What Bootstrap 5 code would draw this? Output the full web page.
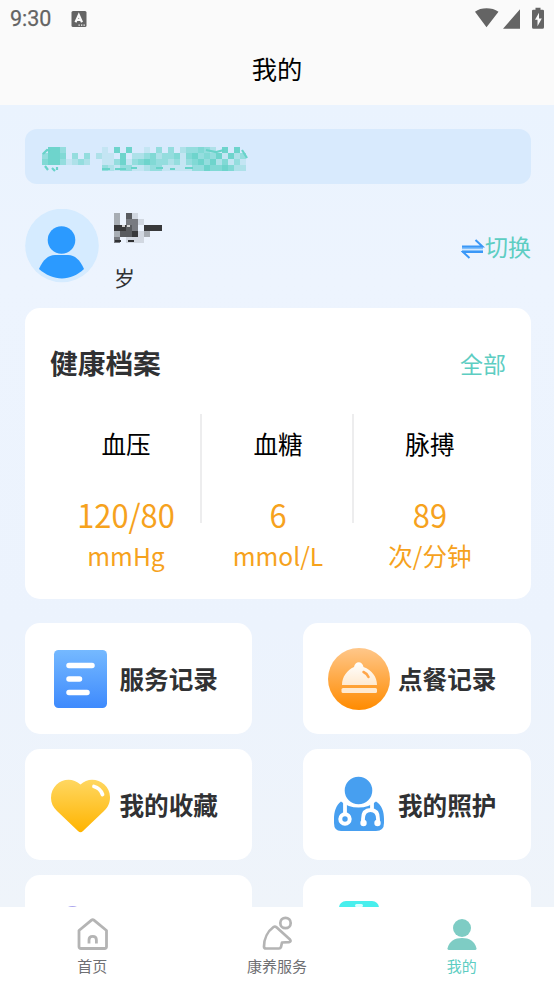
<!DOCTYPE html>
<html lang="zh-CN">
<head>
<meta charset="utf-8">
<meta name="viewport" content="width=device-width, initial-scale=1">
<title>我的</title>
<link href="https://cdn.jsdelivr.net/npm/bootstrap@5.3.0/dist/css/bootstrap.min.css" rel="stylesheet">
<style>
body{font-family:"Noto Sans CJK SC",sans-serif;color:#303133;background:#fff;line-height:1}
svg{display:block;flex:none}
.app{height:984px}
.topbar{height:105px;background:#fafafa}
.status{height:37px;padding:0 9px 0 10px;color:#646464}
.clock{font:400 21.5px/37px Roboto,sans-serif;-webkit-text-stroke:.25px #646464}
.ime-icon{margin-left:20px}
.page-title{font-size:25.3px;line-height:63px;color:#000}
.content-area{background:linear-gradient(#eaf3fe 0,#edf4fe 22%,#ecf3fd 65%,#eff4fa 100%);padding:24px 23px 0 25px;min-height:0}
.notice{height:55px;border-radius:12px;background:#d8eafd;padding:6px 0 0 17px}
.profile{margin-top:25px;height:74px}
.age{font-size:21px;line-height:24px;margin:26px 0 0 -1px;color:#303133}
.teal{color:#5dcdc2}
.switcher{font-size:23px;line-height:28px}
.panel{background:#fff;border-radius:15px}
.health{margin-top:25px;height:291px;padding:34px 25px 0}
.health h2{font-size:27.7px;font-weight:700;line-height:40px;margin:0}
.all-link{font-size:23px;line-height:42px}
.metrics{margin-top:30px}
.metric{height:165px;position:relative}
.metric+.metric::before{content:"";position:absolute;left:-1.5px;top:0;width:1.5px;height:109px;background:#ededee}
.metric-name{font-size:24.6px;line-height:36px;padding-top:11px;color:#000}
.metric-value{font-size:30.8px;line-height:40px;margin-top:33px}
.metric-value span{display:inline-block;transform:scaleY(1.04)}
.metric-unit{font-size:24.6px;line-height:36px;margin-top:3px}
.orange{color:#f6a21d}
.tiles{margin-top:24px;display:grid;grid-template-columns:227px 228px;justify-content:space-between;row-gap:15px}
.tile{height:111px;padding-left:24px;font-size:24.6px;font-weight:700}
.tile:nth-child(even){padding-left:25px}
.tile svg{margin-right:8.5px}
.tile:nth-child(even) svg{margin-right:8px}
.tabbar{height:77px;font-size:15px;color:#6f7073;z-index:2}
.tab-item{padding-top:8px}
.tab-item span{line-height:20px;margin-top:3px}
</style>
<script src="https://cdn.jsdelivr.net/npm/bootstrap@5.3.0/dist/js/bootstrap.bundle.min.js"></script>
</head>
<body>
<div class="app d-flex flex-column overflow-hidden">
  <header class="topbar flex-shrink-0">
    <div class="status d-flex align-items-center">
      <span class="clock">9:30</span>
      <svg class="ime-icon" width="16" height="18" viewBox="0 0 16 18"><rect x=".5" y="1" width="15" height="16" rx="1.500" fill="#646464"/><path d="M4.500 12.200 7.800 5 11 12.200M5.600 10h4.400" fill="none" stroke="#fafafa" stroke-width="2.200"/><path d="M7.500 15.200h1.300m1.200 0h1.300m1.200 0h1.300" stroke="#fafafa" stroke-width="1.200"/></svg>
      <svg class="ms-auto" width="71" height="24" viewBox="474 7.800 71 24" fill="#646464"><path d="M475 12.500C481 8 492 8 498.500 12.500L486.500 28ZM520 10v19.500h-17ZM535.500 8.500h5v2h2.200q1.300 0 1.300 1.300v16.200q0 1.500-1.500 1.500h-9q-1.500 0-1.500-1.500V11.800q0-1.300 1.300-1.300h2.200Z"/><path d="m539 13.500-4 7h2.500V27l4.300-7.800h-2.800Z" fill="#fafafa"/></svg>
    </div>
    <div class="page-title text-center">我的</div>
  </header>

  <main class="content-area flex-fill overflow-hidden">
    <div class="notice d-flex align-items-center">
      <svg id="noticeMask" width="206" height="26" viewBox="0 0 206 26"></svg>
    </div>
    <div class="profile d-flex">
      <svg width="74" height="74" viewBox="0 0 74 74"><circle cx="37" cy="36.500" r="36.800" fill="#d5ebff"/><circle cx="36.500" cy="31" r="13.800" fill="#2b9aff"/><path d="M14 60C18 51 23 46 30 46h13c7 0 12 5 16 14-13 12.500-31 12.500-45 0Z" fill="#2b9aff"/></svg>
      <div class="ms-3">
        <svg id="nameMask" width="48" height="30" viewBox="0 0 48 30" transform="translate(-1 4)"></svg>
        <div class="age">岁</div>
      </div>
      <div class="ms-auto d-flex align-items-center teal switcher">
        <svg width="24" height="22" viewBox="0 0 24 22" transform="translate(0 3)"><path d="M1 9.500h21M1 13.200h21" stroke="#82c0fb" stroke-width="3"/><path d="M1 8.500h20.500L14.500 2M22 14H2l6.500 6" fill="none" stroke="#3b98f7" stroke-width="2"/></svg><span>切换</span>
      </div>
    </div>

    <section class="panel health">
      <div class="d-flex justify-content-between">
        <h2>健康档案</h2><span class="teal all-link">全部</span>
      </div>
      <div class="row g-0 text-center metrics">
        <div class="col-4 metric"><div class="metric-name">血压</div><div class="metric-value orange"><span>120/80</span></div><div class="metric-unit orange">mmHg</div></div>
        <div class="col-4 metric"><div class="metric-name">血糖</div><div class="metric-value orange"><span>6</span></div><div class="metric-unit orange">mmol/L</div></div>
        <div class="col-4 metric"><div class="metric-name">脉搏</div><div class="metric-value orange"><span>89</span></div><div class="metric-unit orange">次/分钟</div></div>
      </div>
    </section>

    <div class="tiles">
      <div class="panel tile d-flex align-items-center">
        <svg width="62" height="62" viewBox="0 0 62 62"><defs><linearGradient id="gBlue" x2="0" y2="1"><stop stop-color="#75b9ff"/><stop offset="1" stop-color="#3e8afd"/></linearGradient></defs><rect x="5" y="2" width="53" height="58" rx="4.500" fill="url(#gBlue)"/><path d="M20 17.500h23M20 31h10.500M20 44.500h18" stroke="#fff" stroke-width="5.500" stroke-linecap="round"/></svg>
        <span>服务记录</span>
      </div>
      <div class="panel tile d-flex align-items-center">
        <svg width="62" height="62" viewBox="0 0 62 62"><defs><linearGradient id="gOrange" x2="0" y2="1"><stop stop-color="#ffc78a"/><stop offset="1" stop-color="#ff8b00"/></linearGradient><linearGradient id="gCream" x2="0" y2="1"><stop stop-color="#fff"/><stop offset="1" stop-color="#ffead0"/></linearGradient></defs><circle cx="31" cy="31" r="31" fill="url(#gOrange)"/><path d="M14 37c0-8 5-15 12-18C27 12.500 34.500 12.500 35.500 19 44 22 49 29 49 37Z" fill="url(#gCream)"/><path d="M35.500 24c2.500 1 4 2.500 5 5" stroke="#ffa64a" stroke-width="2.500" stroke-linecap="round" fill="none"/><rect x="13.500" y="40" width="35.500" height="5" rx="1.500" fill="#ffead0"/></svg>
        <span>点餐记录</span>
      </div>
      <div class="panel tile d-flex align-items-center">
        <svg width="62" height="62" viewBox="0 0 62 62"><defs><linearGradient id="gHeart" x2="0" y2="1"><stop stop-color="#ffd761"/><stop offset="1" stop-color="#ffb400"/></linearGradient></defs><path d="M31.500 10.500C42 0 61 8 61 23c0 6-2 10-6 14L34 57q-2.500 2.500-5 0L8 37C4 33 2 29 2 24 2 8 20 0 31.500 10.500Z" fill="url(#gHeart)"/><path d="M45 12.500c4 1 7 4 8.500 8" fill="none" stroke="#fff" stroke-width="3.800" stroke-linecap="round"/></svg>
        <span>我的收藏</span>
      </div>
      <div class="panel tile d-flex align-items-center">
        <svg width="62" height="62" viewBox="0 -1 62 62"><path d="M13 26.500q7 6 17.500 6t17.500-6c6 3.500 8 10.500 8 17.500v4q0 8-8 8H13q-7 0-7-8v-4c0-7 2-14 7-17.500Z" fill="#479ff0"/><circle cx="30.500" cy="15.500" r="15" fill="#479ff0" stroke="#fff" stroke-width="2.400"/><path d="M17 26v14M44 26v9M35 49v-5q0-9 7.500-9T50 44v5" stroke="#fff" stroke-width="3.800" fill="none"/><circle cx="17" cy="44" r="4.700" fill="#479ff0" stroke="#fff" stroke-width="4"/><circle cx="35.500" cy="48" r="3.200" fill="#fff"/><circle cx="49.500" cy="48" r="3.200" fill="#fff"/></svg>
        <span>我的照护</span>
      </div>
      <div class="panel tile d-flex align-items-center">
        <svg width="62" height="62" viewBox="0 0 62 62"><circle cx="23.500" cy="16.500" r="10.500" fill="#aaa5ee"/></svg>
      </div>
      <div class="panel tile d-flex align-items-center">
        <svg width="62" height="62" viewBox="0 0 62 62"><rect x="11" y="1" width="40" height="58" rx="7" fill="#48efed"/><rect x="27" y="4" width="8" height="3" rx="1.500" fill="#d9ffff"/></svg>
      </div>
    </div>
  </main>

  <nav class="tabbar bg-white d-flex flex-shrink-0">
    <div class="tab-item col-4 d-flex flex-column align-items-center">
      <svg width="38" height="38" viewBox="0 0 38 38" fill="none" stroke="#b4b4b4" stroke-width="2.800" stroke-linejoin="round"><path d="M6 15.500 18.500 5.200q1.200-1 2.400 0L33.500 15.500V31.500q0 2-2 2H8q-2 0-2-2Z"/><path d="M16 28.500V25q0-3.700 3.700-3.700t3.700 3.700v3.500"/></svg><span>首页</span>
    </div>
    <div class="tab-item col-4 d-flex flex-column align-items-center">
      <svg width="38" height="38" viewBox="0 0 38 38" fill="none" stroke="#b4b4b4" stroke-width="2.700" stroke-linejoin="round"><circle cx="27.500" cy="8" r="5.200"/><path d="M18.500 12.300 32 24.500q1.500 2-1 2.600l-7 .4-1 4.500q-.5 1.500-2 1.500H8q-2 0-2-2c0-8 4-15.500 9.500-19.500q1.500-1 3 .3Z"/></svg><span>康养服务</span>
    </div>
    <div class="tab-item teal col-4 d-flex flex-column align-items-center">
      <svg width="38" height="38" viewBox="0 0 38 38" fill="#7eccc4"><circle cx="19" cy="13" r="9"/><path d="M4.500 33.500C6 26 12 23 19 23S32 26 33.500 33.500q0 1.500-1.500 1.500H6q-1.500 0-1.500-1.500Z"/></svg><span>我的</span>
    </div>
  </nav>
</div>
<script>
// Privacy masks: each digit is the shade of one 6px cell, 0 is empty.
function drawMask(id, rows, color, alphas, extra) {
  let out = '';
  rows.forEach((row, y) => [...row].forEach((c, x) => {
    if (+c) out += `<rect x="${x * 6}" y="${y * 6}" width="6" height="6" fill="${color}" fill-opacity="${alphas[c]}"/>`;
  }));
  document.getElementById(id).innerHTML = out + extra;
}
drawMask('noticeMask', [
  '0553000000105050010303023343205050',
  '3554030302110502234233414534351523',
  '4553123200113513454332313453524131',
  '0000000000321331123311111335445422'
], '#68d3c9', [0, .18, .38, .6, .78, .95],
 '<path d="M1 7l4-4 3 1M3 19l3 4M10 21l3 3M15 20v3M60 22h8M73 22h11M89 21h6M114 21h7M128 22h5M143 21h8M200 3l5 8M164 3l10 2 8-2" stroke="#68d3c9" stroke-width="2.200" fill="none"/>');
drawMask('nameMask', [
  '20410000',
  '20331000',
  '55430555',
  '24451200',
  '30111000'
], '#303133', [0, .14, .36, .62, .78, .96],
 '<path d="M8 13h10" stroke="#fff" stroke-width="1.500" stroke-dasharray="3 2"/><path d="M1 28h6M14 28h6" stroke="#303133" stroke-width="2"/>');
</script>
</body>
</html>
